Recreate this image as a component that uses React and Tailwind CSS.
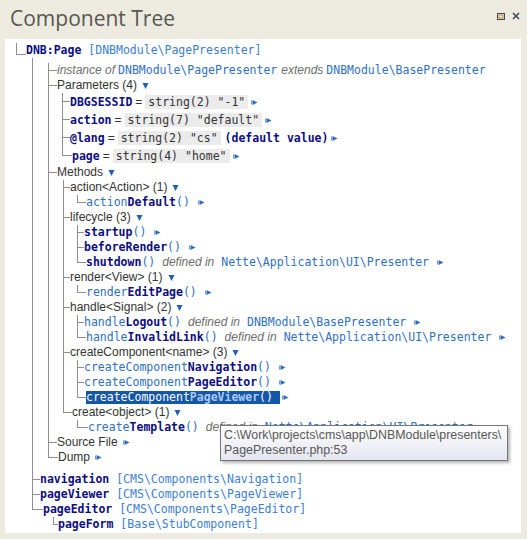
import React from 'react';

const mono = "font-['DejaVu_Sans_Mono',monospace] text-[11.5px]";
const navB = mono + ' font-bold text-[#0d0d82]';
const cls = mono + ' text-[#3b7ed3]';
const meth = mono + ' text-[#2f6fc4]';
const lbl = 'text-[#333]';
const it = 'italic text-[#6e6e6e]';

function Arrow({ className = '' }) {
  return (
    <svg width="7" height="5" viewBox="0 0 7 5" className={'shrink-0 ' + className}>
      <rect x="0" y="0.5" width="1" height="4" fill="#6f9ad0" />
      <polygon points="1.5,0 6.5,2.5 1.5,5" fill="#2a6cc0" />
    </svg>
  );
}

function Down() {
  return (
    <svg width="7" height="7" viewBox="0 0 7 7" className="shrink-0 ml-[5px]">
      <polygon points="0.5,1 6.5,1 3.5,7" fill="#1f5fb5" />
    </svg>
  );
}

const Group = ({ text }) => (
  <>
    <span className={lbl}>{text}</span>
    <Down />
  </>
);

const Param = ({ name, val, extra }) => (
  <>
    <span className={navB}>{name}</span>
    <span className="mx-[3px] text-[#333]">=</span>
    <span className={mono + ' bg-[#ebebeb] text-[#333] px-[3px] leading-[14px]'}>{val}</span>
    {extra}
    <Arrow className="ml-[3px]" />
  </>
);

const Method = ({ pre, name, from }) => (
  <>
    <span className={meth}>{pre}</span>
    <span className={navB}>{name}</span>
    <span className={meth}>()</span>
    {from && (
      <>
        <span className={it + ' ml-[7px]'}>defined in</span>
        <span className={meth + ' ml-[7px]'}>{from}</span>
      </>
    )}
    <Arrow className="ml-[8px]" />
  </>
);

const Comp = ({ name, type }) => (
  <>
    <span className={navB}>{name}</span>
    <span className={cls}>&nbsp;[{type}]</span>
  </>
);

const N8 = 'Nette\\Application\\UI\\Presenter';

const methods = [
  {
    row: <Group text="action<Action> (1)" />,
    ml: 'ml-[14px]', conn: { a: 'w-[7px]', b: 'w-[9px]' },
    children: [{ row: <Method pre="action" name="Default" /> }],
  },
  {
    row: <Group text="lifecycle (3)" />,
    ml: 'ml-[14px]', conn: { a: 'w-[7px]', b: 'w-[9px]' },
    children: [
      { row: <Method name="startup" /> },
      { row: <Method name="beforeRender" /> },
      { row: <Method name="shutdown" from={N8} /> },
    ],
  },
  {
    row: <Group text="render<View> (1)" />,
    ml: 'ml-[14px]', conn: { a: 'w-[7px]', b: 'w-[9px]' },
    children: [{ row: <Method pre="render" name="EditPage" /> }],
  },
  {
    row: <Group text="handle<Signal> (2)" />,
    ml: 'ml-[14px]', conn: { a: 'w-[7px]', b: 'w-[9px]' },
    children: [
      { row: <Method pre="handle" name="Logout" from="DNBModule\BasePresenter" /> },
      { row: <Method pre="handle" name="InvalidLink" from={N8} /> },
    ],
  },
  {
    row: <Group text="createComponent<name> (3)" />,
    ml: 'ml-[14px]', conn: { a: 'w-[7px]', b: 'w-[9px]' },
    children: [
      { row: <Method pre="createComponent" name="Navigation" /> },
      { row: <Method pre="createComponent" name="PageEditor" /> },
      {
        row: (
          <>
            <span className={mono + ' bg-[#1456a8] leading-[13px] text-white'}>
              createComponent<span className="font-bold text-[#a9c9f5]">PageViewer</span>()&nbsp;
            </span>
            <Arrow className="ml-[2px]" />
          </>
        ),
      },
    ],
  },
  {
    row: <Group text="create<object> (1)" />,
    ml: 'ml-[14px]', conn: { a: 'w-[7px]', b: 'w-[11px]' },
    children: [{ row: <Method pre="create" name="Template" from={N8} /> }],
  },
];

const details = [
  {
    row: (
      <>
        <span className={it}>instance of</span>
        <span className={meth + ' ml-[3px]'}>DNBModule\PagePresenter</span>
        <span className={it + ' ml-[4px]'}>extends</span>
        <span className={meth + ' ml-[3px]'}>DNBModule\BasePresenter</span>
      </>
    ),
  },
  {
    row: <Group text="Parameters (4)" />,
    ml: 'ml-[14px]', conn: { a: 'w-[8px]', b: 'w-[10px]' },
    children: [
      { h: 'h-[18px]', ch: 'h-[9px]', row: <Param name="DBGSESSID" val={'string(2) "-1"'} /> },
      { h: 'h-[18px]', ch: 'h-[9px]', row: <Param name="action" val={'string(7) "default"'} /> },
      {
        h: 'h-[18px]', ch: 'h-[9px]',
        row: <Param name="@lang" val={'string(2) "cs"'} extra={<span className={navB + ' ml-[4px]'}>(default value)</span>} />,
      },
      { h: 'h-[18px]', ch: 'h-[9px]', row: <Param name="page" val={'string(4) "home"'} /> },
    ],
  },
  {
    row: <Group text="Methods" />,
    ml: 'ml-[15px]', conn: { a: 'w-[7px]', b: 'w-[9px]' },
    children: methods,
  },
  { row: <><span className={lbl}>Source File</span><Arrow className="ml-[5px]" /></> },
  { row: <><span className={lbl}>Dump</span><Arrow className="ml-[5px]" /></> },
];

const tree = {
  ch: 'h-[12px]',
  row: <Comp name="DNB:Page" type="DNBModule\PagePresenter" />,
  ml: 'ml-[16px]', conn: { a: 'w-[8px]', b: 'w-[11px]' },
  children: [
    { bare: true, ml: 'ml-[16px] pt-[5px] pb-[7px]', conn: { a: 'w-[9px]', b: 'w-[10px]' }, children: details },
    { row: <Comp name="navigation" type="CMS\Components\Navigation" /> },
    { row: <Comp name="pageViewer" type="CMS\Components\PageViewer" /> },
    {
      row: <Comp name="pageEditor" type="CMS\Components\PageEditor" />,
      ml: 'ml-[21px]', conn: { a: 'w-[5px]', b: 'w-[5px]' },
      children: [{ row: <Comp name="pageForm" type="Base\StubComponent" /> }],
    },
  ],
};

function TreeNode({ node, last, conn }) {
  return (
    <li className={last ? '' : 'shadow-[inset_1px_0_0_#8e8e8e]'}>
      {!node.bare && (
        <div className={'flex ' + (node.h || 'h-[15px]')}>
          <span
            className={
              'shrink-0 ' +
              (node.ch || 'h-[8px]') +
              ' ' +
              (last ? conn.b + ' shadow-[inset_1px_-1px_0_#8e8e8e]' : conn.a + ' shadow-[inset_0_-1px_0_#8e8e8e]')
            }
          />
          <div className="flex items-center whitespace-nowrap">{node.row}</div>
        </div>
      )}
      {node.children && (
        <ul className={node.ml}>
          {node.children.map((c, i) => (
            <TreeNode key={i} node={c} last={i === node.children.length - 1} conn={node.conn} />
          ))}
        </ul>
      )}
    </li>
  );
}

export default function App() {
  return (
    <div className="relative w-[527px] h-[539px] overflow-hidden bg-[#edeae0] font-['Liberation_Sans',Arial,sans-serif] text-[12px] leading-[15px]">
      <div className="flex h-[39px] items-start justify-between">
        <h1 className="pl-[10px] pt-[8px] font-['Open_Sans',sans-serif] text-[21px] leading-[21px] text-[#575753]">
          Component Tree
        </h1>
        <div className="flex items-center gap-[7px] pt-[12px] pr-[7px]">
          <svg width="8" height="7" viewBox="0 0 8 7">
            <rect x="0.5" y="0.5" width="7" height="6" fill="none" stroke="#3f4b5a" strokeWidth="1" />
            <rect x="2" y="2" width="4" height="3" fill="none" stroke="#c9923f" strokeWidth="1" />
          </svg>
          <svg width="8" height="8" viewBox="0 0 8 8">
            <path d="M1 1 L7 7 M7 1 L1 7" stroke="#3c4a5c" strokeWidth="1.5" />
          </svg>
        </div>
      </div>
      <div className="ml-[5px] w-[516px] h-[494px] bg-white pl-[11px] pt-[4px]">
        <ul>
          <TreeNode node={tree} last conn={{ a: 'w-[9px]', b: 'w-[10px]' }} />
        </ul>
      </div>
      <div className="absolute left-[220px] top-[425px] w-[288px] h-[36px] border border-[#767676] bg-gradient-to-b from-white to-[#e4e5f0] px-[3px] pt-[2px] text-[12.4px] leading-[15px] text-[#575757] shadow-[2px_2px_3px_rgba(0,0,0,0.3)]">
        <div>C:\Work\projects\cms\app\DNBModule\presenters\</div>
        <div>PagePresenter.php:53</div>
      </div>
    </div>
  );
}
